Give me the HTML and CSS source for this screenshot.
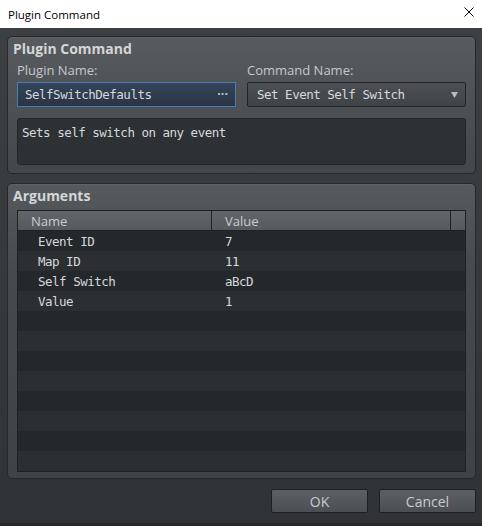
FILE: index.html
```html
<!DOCTYPE html>
<html>
<head>
	<title>Plugin Command</title>
	<link rel="stylesheet" href="styles.css">
</head>
<body>
	<div class="titlebar">
		<span class="title">Plugin Command</span>
		<svg class="close" width="10" height="10" viewBox="0 0 10 10">
			<path d="M0.5 0.5L9.5 9.5M9.5 0.5L0.5 9.5" stroke="#000" stroke-width="1" fill="none"/>
		</svg>
	</div>
	<div class="window">
		<div class="group command-group">
			<div class="group-title">Plugin Command</div>
			<div class="fields">
				<div class="field">
					<label>Plugin Name:</label>
					<div class="input plugin-input">
						<span>SelfSwitchDefaults</span>
						<span class="dots">···</span>
					</div>
				</div>
				<div class="field">
					<label>Command Name:</label>
					<div class="input combo">
						<span>Set Event Self Switch</span>
						<svg class="arrow" width="7" height="6" viewBox="0 0 7 6">
							<path d="M0 0H7L3.5 6Z" fill="#b8bcc0"/>
						</svg>
					</div>
				</div>
			</div>
			<div class="description">Sets self switch on any event</div>
		</div>

		<div class="group args-group">
			<div class="group-title">Arguments</div>
			<div class="table">
				<div class="thead">
					<div class="th col-name">Name</div>
					<div class="th col-value">Value</div>
					<div class="th col-pad"></div>
				</div>
				<div class="row"><div class="td col-name">Event ID</div><div class="td col-value">7</div></div>
				<div class="row"><div class="td col-name">Map ID</div><div class="td col-value">11</div></div>
				<div class="row"><div class="td col-name">Self Switch</div><div class="td col-value">aBcD</div></div>
				<div class="row"><div class="td col-name">Value</div><div class="td col-value">1</div></div>
				<div class="row"></div>
				<div class="row"></div>
				<div class="row"></div>
				<div class="row"></div>
				<div class="row"></div>
				<div class="row"></div>
				<div class="row"></div>
				<div class="row"></div>
			</div>
		</div>

		<div class="buttons">
			<button class="btn">OK</button>
			<button class="btn">Cancel</button>
		</div>
	</div>
</body>
</html>
```

FILE: styles.css
```css
body {
	margin: 0;
	width: 482px;
	height: 526px;
	overflow: hidden;
	font-family: "Open Sans", sans-serif;
}

.titlebar {
	height: 28px;
	box-sizing: border-box;
	padding: 0 8px 0 8px;
	background-color: #fff;
	display: flex;
	align-items: center;
	justify-content: space-between;
}

.title {
	font-size: 11.5px;
	color: #000;
}

.close {
	margin-top: -4px;
}

.window {
	height: 498px;
	box-sizing: border-box;
	padding: 8px 6px 0 7px;
	background: linear-gradient(#3d4043, #303336);
	border-bottom: 3px solid #25272a;
	display: flex;
	flex-direction: column;
}

.group {
	box-sizing: border-box;
	padding: 3px 9px 0 9px;
	border: 1px solid #26282a;
	border-radius: 5px;
	background: linear-gradient(#575b5e, #43474a);
	box-shadow: inset 0 1px 0 rgba(255, 255, 255, 0.05);
}

.command-group {
	height: 138px;
}

.args-group {
	height: 296px;
	margin-top: 9px;
	background: linear-gradient(#565a5d 0%, #464a4d 30%, #3f4346 100%);
}

.group-title {
	margin-left: -4px;
	font-size: 14px;
	font-weight: bold;
	line-height: 18px;
	color: #d4d6d8;
}

.fields {
	display: flex;
	gap: 11px;
	margin-top: 4px;
}

.field {
	flex: 1;
	display: flex;
	flex-direction: column;
	gap: 4px;
}

label {
	font-size: 13px;
	line-height: 16px;
	color: #c4c8cc;
}

.input {
	height: 25px;
	box-sizing: border-box;
	display: flex;
	align-items: center;
	justify-content: space-between;
	font-family: "DejaVu Sans Mono", monospace;
	font-size: 12.5px;
	letter-spacing: -0.5px;
	color: #d6d9dc;
}

.plugin-input {
	padding: 0 7px 0 7px;
	border: 1px solid #4a7bb4;
	background: linear-gradient(#34445a, #2a3545);
}

.dots {
	font-family: "Open Sans", sans-serif;
	font-weight: bold;
	letter-spacing: 0;
	color: #c0c8d2;
	margin-bottom: 3px;
}

.combo {
	padding: 0 7px 0 9px;
	border: 1px solid #222427;
	border-radius: 2px;
	background: linear-gradient(#4c5054, #3f4346);
}

.description {
	height: 47px;
	box-sizing: border-box;
	margin-top: 11px;
	padding: 6px 4px;
	border: 1px solid #232528;
	border-radius: 3px;
	background-color: #2e3134;
	font-family: "DejaVu Sans Mono", monospace;
	font-size: 12.5px;
	line-height: 16px;
	letter-spacing: -0.5px;
	color: #d6d9dc;
}

.table {
	margin-top: 5px;
	border: 1px solid #1f2123;
	background-color: #2c2f32;
}

.thead {
	display: flex;
	height: 20px;
	box-sizing: border-box;
	border-bottom: 1px solid #1f2123;
	background: linear-gradient(#62666a, #565a5e);
}

.th {
	box-sizing: border-box;
	padding-left: 13px;
	font-size: 13px;
	line-height: 21px;
	color: #c8ccd0;
}

.th.col-name {
	width: 194px;
	border-right: 1px solid #1f2123;
}

.th.col-value {
	width: 239px;
	border-right: 1px solid #1f2123;
}

.th.col-pad {
	flex: 1;
}

.row {
	display: flex;
	height: 20px;
	background-color: #2c2f32;
}

.row:nth-child(even) {
	background-color: #25282b;
}

.td {
	font-family: "DejaVu Sans Mono", monospace;
	font-size: 12.5px;
	line-height: 22px;
	letter-spacing: -0.5px;
	color: #d6d9dc;
}

.td.col-name {
	width: 194px;
	box-sizing: border-box;
	padding-left: 20px;
}

.td.col-value {
	padding-left: 13px;
}

.buttons {
	display: flex;
	justify-content: flex-end;
	gap: 11px;
	margin-top: 10px;
}

.btn {
	width: 97px;
	height: 24px;
	padding: 0;
	border: 1px solid #1e2022;
	border-radius: 2px;
	background: linear-gradient(#5c6064, #4b4f53);
	font-family: "Open Sans", sans-serif;
	font-size: 14px;
	color: #c8ccd0;
}
```
